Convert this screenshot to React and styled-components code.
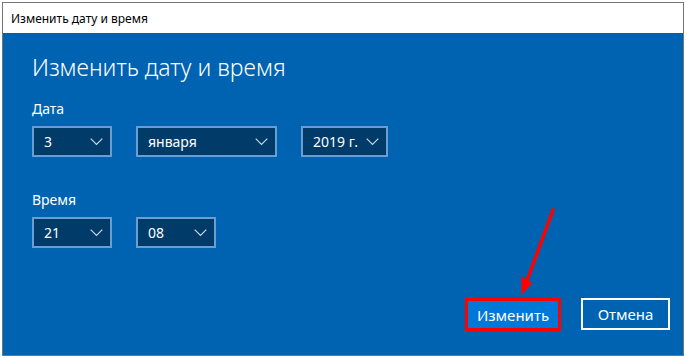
import React from "react";
import styled, { createGlobalStyle } from "styled-components";

const Global = createGlobalStyle`
  html, body { margin: 0; padding: 0; background: #ffffff; }
  * { box-sizing: border-box; }
`;

const FONT = `"Noto Sans", "Open Sans", "DejaVu Sans", sans-serif`;

const Window = styled.div`
  margin: 2px;
  width: 682px;
  height: 354px;
  border: 1px solid #767676;
  display: flex;
  flex-direction: column;
  font-family: ${FONT};
`;

const TitleBar = styled.div`
  height: 30px;
  flex: none;
  background: #ffffff;
  display: flex;
  align-items: center;
  padding-left: 8px;
  font-size: 12px;
  color: #000000;
`;

const Body = styled.div`
  flex: 1;
  position: relative;
  background: #0063b1;
  display: flex;
  flex-direction: column;
  padding: 18px 13px 24px 29px;
  color: #ffffff;
`;

const Heading = styled.h1`
  margin: 0;
  font-size: 23px;
  font-weight: 300;
  line-height: 32px;
  letter-spacing: 0;
`;

const Field = styled.div`
  display: flex;
  flex-direction: column;
  margin-top: ${(p) => p.$top}px;
`;

const Label = styled.div`
  font-size: 14px;
  line-height: 20px;
  margin-bottom: 7px;
`;

const Row = styled.div`
  display: flex;
  gap: 24px;
`;

const Select = styled.div`
  width: ${(p) => p.$w}px;
  height: 31px;
  border: 2px solid #6a9ed3;
  background: #003b69;
  display: flex;
  align-items: center;
  justify-content: space-between;
  padding: 0 7px 0 10px;
  font-size: 14px;
  color: #ffffff;
`;

const Footer = styled.div`
  margin-top: auto;
  display: flex;
  justify-content: flex-end;
  align-items: flex-start;
  gap: 20px;
`;

const Highlight = styled.div`
  border: 3px solid #ff0000;
  width: 96px;
  height: 33px;
  display: flex;
`;

const PrimaryButton = styled.button`
  flex: 1;
  border: none;
  background: #0078d7;
  color: #ffffff;
  font-family: ${FONT};
  font-size: 15px;
  padding: 0;
`;

const CancelButton = styled.button`
  width: 89px;
  height: 32px;
  border: 2px solid #ffffff;
  background: transparent;
  color: #ffffff;
  font-family: ${FONT};
  font-size: 15px;
  padding: 0;
`;

const Arrow = styled.svg`
  position: absolute;
  left: 507px;
  top: 167px;
  overflow: visible;
`;

const Chevron = () => (
  <svg width="13" height="8" viewBox="0 0 13 8">
    <path d="M0.7 0.7 L6.5 6.5 L12.3 0.7" fill="none" stroke="#c9d7e6" strokeWidth="1.2" />
  </svg>
);

const Dropdown = ({ w, value }) => (
  <Select $w={w}>
    <span>{value}</span>
    <Chevron />
  </Select>
);

export default function App() {
  return (
    <>
      <Global />
      <Window>
        <TitleBar>Изменить дату и время</TitleBar>
        <Body>
          <Heading>Изменить дату и время</Heading>
          <Field $top={16}>
            <Label>Дата</Label>
            <Row>
              <Dropdown w={80} value="3" />
              <Dropdown w={141} value="января" />
              <Dropdown w={87} value="2019 г." />
            </Row>
          </Field>
          <Field $top={33}>
            <Label>Время</Label>
            <Row>
              <Dropdown w={80} value="21" />
              <Dropdown w={80} value="08" />
            </Row>
          </Field>
          <Footer>
            <Highlight>
              <PrimaryButton>Изменить</PrimaryButton>
            </Highlight>
            <CancelButton>Отмена</CancelButton>
          </Footer>
          <Arrow width="50" height="100" viewBox="0 0 50 100">
            <line x1="43" y1="10" x2="16.5" y2="82" stroke="#ff0000" strokeWidth="3.5" strokeLinecap="round" />
            <polygon points="11.5,76 22.5,83 11.5,95" fill="#ff0000" />
          </Arrow>
        </Body>
      </Window>
    </>
  );
}
